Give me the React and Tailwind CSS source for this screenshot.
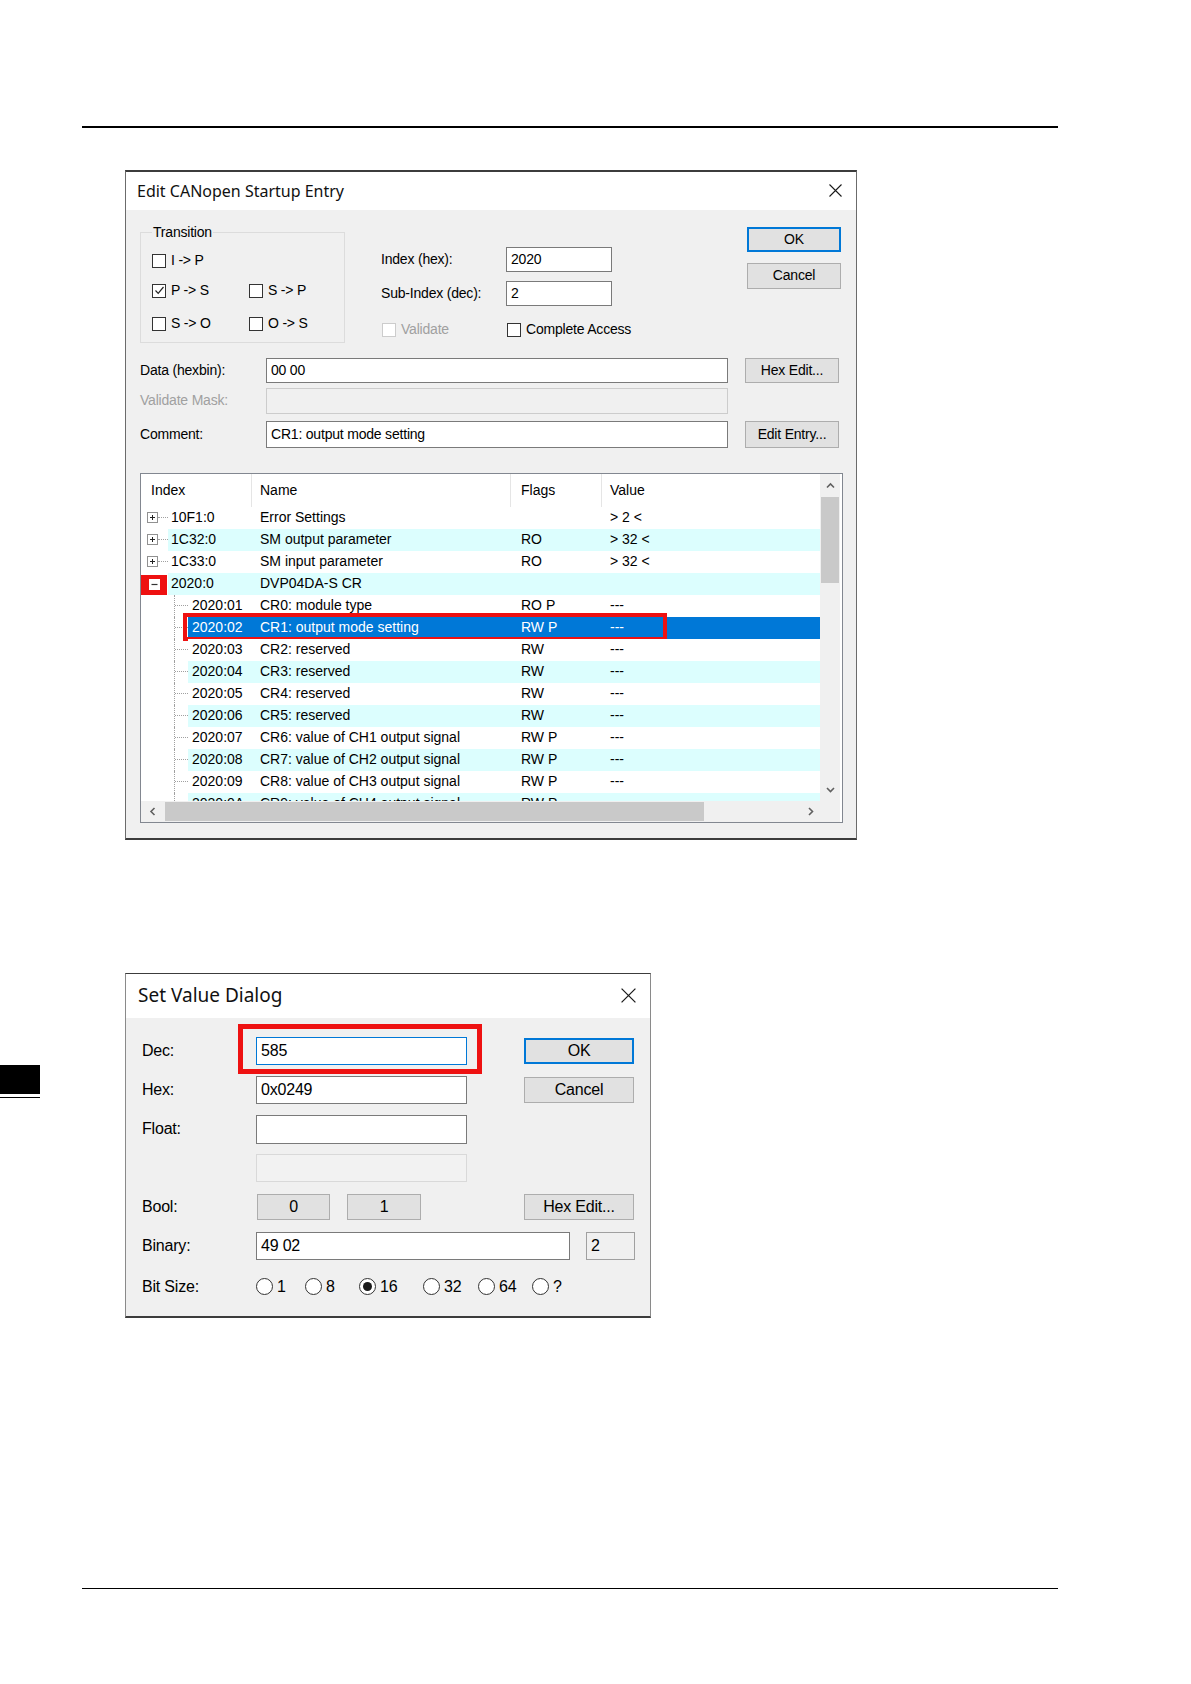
import React from "react";

const CloseIcon = ({ size = 13 }) => (
  <svg width={size} height={size} viewBox="0 0 13 13" fill="none" stroke="#1a1a1a" strokeWidth="1.1">
    <path d="M0.5 0.5 L12.5 12.5 M12.5 0.5 L0.5 12.5" />
  </svg>
);

const Chev = ({ dir }) => {
  const pts = {
    up: "1,5.5 4.5,2 8,5.5",
    down: "1,2 4.5,5.5 8,2",
    left: "5.5,1 2,4.5 5.5,8",
    right: "2,1 5.5,4.5 2,8",
  };
  const vertical = dir === "up" || dir === "down";
  return (
    <svg width={vertical ? 9 : 7} height={vertical ? 7 : 9} viewBox={vertical ? "0 0 9 7" : "0 0 7 9"} fill="none" stroke="#606060" strokeWidth="1.6">
      <polyline points={pts[dir]} />
    </svg>
  );
};

const Checkbox = ({ checked, disabled, label }) => (
  <div className="flex items-center h-[16px]">
    <span
      className={`w-[14px] h-[14px] border bg-white flex items-center justify-center ${
        disabled ? "border-[#cccccc]" : "border-[#333333]"
      }`}
    >
      {checked && (
        <svg width="11" height="11" viewBox="0 0 11 11" fill="none" stroke="#222" strokeWidth="1.2">
          <polyline points="1.5,5.5 4.2,8.3 9.5,2" />
        </svg>
      )}
    </span>
    <span className={`ml-[5px] whitespace-nowrap ${disabled ? "text-[#a0a0a0]" : ""}`}>{label}</span>
  </div>
);

const Btn = ({ children, def, className = "" }) => (
  <div
    className={`flex items-center justify-center bg-[#e1e1e1] whitespace-nowrap ${
      def ? "border-2 border-[#0078d7]" : "border border-[#adadad]"
    } ${className}`}
  >
    {children}
  </div>
);

const Field = ({ children, focus, className = "" }) => (
  <div
    className={`flex items-center bg-white border pl-[4px] whitespace-nowrap ${
      focus ? "border-[#0078d7]" : "border-[#7a7a7a]"
    } ${className}`}
  >
    {children}
  </div>
);

const PlusBox = () => (
  <svg width="11" height="11" viewBox="0 0 11 11">
    <rect x="0.5" y="0.5" width="10" height="10" fill="white" stroke="#919191" />
    <path d="M3 5.5h5M5.5 3v5" stroke="#222" />
  </svg>
);

const MinusBox = () => (
  <svg width="11" height="11" viewBox="0 0 11 11">
    <rect x="0.5" y="0.5" width="10" height="10" fill="white" stroke="white" />
    <path d="M2.5 5.5h6" stroke="#333" strokeWidth="1.2" />
  </svg>
);

const rows = [
  { level: 0, exp: "plus", idx: "10F1:0", name: "Error Settings", flags: "", value: "> 2 <" },
  { level: 0, exp: "plus", idx: "1C32:0", name: "SM output parameter", flags: "RO", value: "> 32 <" },
  { level: 0, exp: "plus", idx: "1C33:0", name: "SM input parameter", flags: "RO", value: "> 32 <" },
  { level: 0, exp: "minus", idx: "2020:0", name: "DVP04DA-S CR", flags: "", value: "" },
  { level: 1, idx: "2020:01", name: "CR0: module type", flags: "RO P", value: "---" },
  { level: 1, idx: "2020:02", name: "CR1: output mode setting", flags: "RW P", value: "---", selected: true },
  { level: 1, idx: "2020:03", name: "CR2: reserved", flags: "RW", value: "---" },
  { level: 1, idx: "2020:04", name: "CR3: reserved", flags: "RW", value: "---" },
  { level: 1, idx: "2020:05", name: "CR4: reserved", flags: "RW", value: "---" },
  { level: 1, idx: "2020:06", name: "CR5: reserved", flags: "RW", value: "---" },
  { level: 1, idx: "2020:07", name: "CR6: value of CH1 output signal", flags: "RW P", value: "---" },
  { level: 1, idx: "2020:08", name: "CR7: value of CH2 output signal", flags: "RW P", value: "---" },
  { level: 1, idx: "2020:09", name: "CR8: value of CH3 output signal", flags: "RW P", value: "---" },
  { level: 1, idx: "2020:0A", name: "CR9: value of CH4 output signal", flags: "RW P", value: "---" },
];

const TreeRow = ({ r, i }) => {
  const bg = r.selected ? "bg-[#0078d7] text-white" : i % 2 === 1 ? "bg-[#dcfefe]" : "bg-white";
  return (
    <div className="relative flex h-[22px] shrink-0">
      {r.level === 0 ? (
        <div className="w-[27px] h-full flex items-center">
          {r.exp === "minus" ? (
            <div className="mt-[2px] w-[26px] h-[20px] bg-[#ee1111] flex items-center justify-center">
              <MinusBox />
            </div>
          ) : (
            <>
              <div className="ml-[6px] flex">
                <PlusBox />
              </div>
              <div className="w-[10px] border-t border-dotted border-[#a0a0a0]" />
            </>
          )}
        </div>
      ) : (
        <div className="w-[47px] h-full flex">
          <div className="ml-[33px] h-full border-l border-dotted border-[#a0a0a0]" />
          <div className="self-center w-[14px] border-t border-dotted border-[#a0a0a0]" />
        </div>
      )}
      <div className={`flex-1 h-full flex items-center whitespace-nowrap ${bg}`}>
        <div className={r.level === 0 ? "w-[84px] pl-[3px]" : "w-[64px] pl-[4px]"}>{r.idx}</div>
        <div className="w-[259px] pl-[8px]">{r.name}</div>
        <div className="w-[91px] pl-[10px]">{r.flags}</div>
        <div className="pl-[8px]">{r.value}</div>
      </div>
      {r.selected && (
        <div className="absolute left-[42px] top-[-4px] w-[484px] h-[28px] border-4 border-[#ee1111]" />
      )}
    </div>
  );
};

const EntryList = () => (
  <div className="mt-[25px] h-[350px] border border-[#828790] bg-white flex flex-col text-[14px] tracking-normal">
    <div className="flex h-[327px]">
      <div className="w-[679px] flex flex-col">
        <div className="flex h-[33px] shrink-0">
          <div className="w-[111px] flex items-center pl-[10px] border-r border-[#e5e5e5]">Index</div>
          <div className="w-[259px] flex items-center pl-[8px] border-r border-[#e5e5e5]">Name</div>
          <div className="w-[91px] flex items-center pl-[10px] border-r border-[#e5e5e5]">Flags</div>
          <div className="flex-1 flex items-center pl-[8px]">Value</div>
        </div>
        <div className="h-[294px] overflow-hidden flex flex-col">
          {rows.map((r, i) => (
            <TreeRow key={r.idx} r={r} i={i} />
          ))}
        </div>
      </div>
      <div className="w-[20px] bg-[#f0f0f0] flex flex-col">
        <div className="h-[23px] flex items-center justify-center">
          <Chev dir="up" />
        </div>
        <div className="mx-[1px] h-[86px] bg-[#c9c9c9]" />
        <div className="flex-1" />
        <div className="h-[17px] mb-[3px] flex items-center justify-center">
          <Chev dir="down" />
        </div>
      </div>
    </div>
    <div className="flex h-[21px]">
      <div className="w-[679px] flex bg-[#f0f0f0]">
        <div className="w-[22px] flex items-center justify-center">
          <Chev dir="left" />
        </div>
        <div className="ml-[2px] my-[1px] w-[539px] bg-[#c9c9c9]" />
        <div className="flex-1" />
        <div className="w-[20px] flex items-center justify-center">
          <Chev dir="right" />
        </div>
      </div>
      <div className="w-[20px] bg-[#f0f0f0]" />
    </div>
  </div>
);

const EditDialog = () => (
  <div className="ml-[125px] mt-[42px] w-[732px] h-[670px] flex flex-col border border-[#6b6b6b] border-t-2 border-t-[#3c3c3c] border-b-2 border-b-[#3c3c3c] bg-[#f0f0f0]">
    <div className="h-[38px] shrink-0 bg-white flex items-center pl-[11px] pr-[14px]">
      <span className="font-['Noto_Sans',sans-serif] text-[16px] text-[#111]">Edit CANopen Startup Entry</span>
      <span className="ml-auto flex">
        <CloseIcon />
      </span>
    </div>
    <div className="flex-1 flex flex-col pl-[14px] pr-[13px] pt-[17px] text-[14px] tracking-[-0.2px]">
      <div className="flex items-start h-[116px]">
        <div className="relative mt-[5px] w-[205px] h-[111px] shrink-0 border border-[#dcdcdc]">
          <span className="absolute left-[11px] top-[-9px] bg-[#f0f0f0] px-[1px] leading-[16px]">Transition</span>
          <div className="ml-[11px] mt-[20px] flex flex-col">
            <Checkbox label="I -> P" />
            <div className="mt-[14px] flex">
              <div className="w-[97px]">
                <Checkbox checked label="P -> S" />
              </div>
              <Checkbox label="S -> P" />
            </div>
            <div className="mt-[17px] flex">
              <div className="w-[97px]">
                <Checkbox label="S -> O" />
              </div>
              <Checkbox label="O -> S" />
            </div>
          </div>
        </div>
        <div className="ml-[36px] mt-[20px] flex flex-col">
          <div className="flex items-center h-[25px]">
            <span className="w-[125px]">Index (hex):</span>
            <Field className="w-[106px] h-[25px]">2020</Field>
          </div>
          <div className="flex items-center h-[25px] mt-[9px]">
            <span className="w-[125px]">Sub-Index (dec):</span>
            <Field className="w-[106px] h-[25px]">2</Field>
          </div>
          <div className="flex items-center h-[20px] mt-[14px]">
            <div className="w-[126px] pl-[1px]">
              <Checkbox disabled label="Validate" />
            </div>
            <Checkbox label="Complete Access" />
          </div>
        </div>
        <div className="ml-auto mr-[2px] flex flex-col">
          <Btn def className="w-[94px] h-[25px]">OK</Btn>
          <Btn className="w-[94px] h-[26px] mt-[11px]">Cancel</Btn>
        </div>
      </div>

      <div className="mt-[15px] flex items-center h-[25px]">
        <span className="w-[126px]">Data (hexbin):</span>
        <Field className="w-[462px] h-[25px]">00 00</Field>
        <Btn className="ml-[17px] w-[94px] h-[25px]">Hex Edit...</Btn>
      </div>
      <div className="mt-[5px] flex items-center h-[26px]">
        <span className="w-[126px] text-[#a0a0a0]">Validate Mask:</span>
        <div className="w-[462px] h-[26px] border border-[#cccccc] bg-[#f0f0f0]" />
      </div>
      <div className="mt-[7px] flex items-center h-[27px]">
        <span className="w-[126px]">Comment:</span>
        <Field className="w-[462px] h-[27px]">CR1: output mode setting</Field>
        <Btn className="ml-[17px] w-[94px] h-[27px]">Edit Entry...</Btn>
      </div>

      <EntryList />
    </div>
  </div>
);

const Radio = ({ checked, label, className = "" }) => (
  <div className={`flex items-center ${className}`}>
    <span className="w-[17px] h-[17px] rounded-full border border-[#333333] bg-white flex items-center justify-center">
      {checked && <span className="w-[9px] h-[9px] rounded-full bg-[#1a1a1a]" />}
    </span>
    <span className="ml-[4px]">{label}</span>
  </div>
);

const SetValueDialog = () => (
  <div className="ml-[85px] w-[526px] h-[345px] flex flex-col border border-[#8a8a8a] border-t-[#3c3c3c] border-b-2 border-b-[#3c3c3c] bg-[#f0f0f0] text-[16px] tracking-[-0.2px]">
    <div className="h-[44px] shrink-0 bg-white flex items-center pl-[12px] pr-[14px]">
      <span className="font-['Noto_Sans',sans-serif] text-[19px] tracking-normal text-[#111]">Set Value Dialog</span>
      <span className="ml-auto flex">
        <CloseIcon size={15} />
      </span>
    </div>
    <div className="flex-1 flex flex-col pl-[16px] pt-[19px]">
      <div className="flex items-center h-[28px]">
        <span className="w-[114px]">Dec:</span>
        <div className="relative">
          <Field focus className="w-[211px] h-[28px]">585</Field>
          <div className="absolute left-[-18px] top-[-13px] w-[244px] h-[50px] border-[5px] border-[#ee1111]" />
        </div>
        <Btn def className="ml-[57px] w-[110px] h-[26px]">OK</Btn>
      </div>
      <div className="mt-[11px] flex items-center h-[28px]">
        <span className="w-[114px]">Hex:</span>
        <Field className="w-[211px] h-[28px]">0x0249</Field>
        <Btn className="ml-[57px] w-[110px] h-[26px]">Cancel</Btn>
      </div>
      <div className="mt-[11px] flex items-center h-[29px]">
        <span className="w-[114px]">Float:</span>
        <Field className="w-[211px] h-[29px]" />
      </div>
      <div className="mt-[10px] flex items-center h-[28px]">
        <span className="w-[114px]" />
        <div className="w-[211px] h-[28px] border border-[#d9d9d9] bg-[#f2f2f2]" />
      </div>
      <div className="mt-[12px] flex items-center h-[26px]">
        <span className="w-[114px]">Bool:</span>
        <Btn className="ml-[1px] w-[73px] h-[26px]">0</Btn>
        <Btn className="ml-[17px] w-[74px] h-[26px]">1</Btn>
        <Btn className="ml-[103px] w-[110px] h-[26px]">Hex Edit...</Btn>
      </div>
      <div className="mt-[12px] flex items-center h-[28px]">
        <span className="w-[114px]">Binary:</span>
        <Field className="w-[314px] h-[28px]">49 02</Field>
        <div className="ml-[16px] w-[49px] h-[28px] flex items-center pl-[4px] border border-[#a0a0a0] bg-[#f0f0f0]">2</div>
      </div>
      <div className="mt-[17px] flex items-center h-[20px]">
        <span className="w-[114px]">Bit Size:</span>
        <Radio label="1" className="w-[49px]" />
        <Radio label="8" className="w-[54px]" />
        <Radio checked label="16" className="w-[64px]" />
        <Radio label="32" className="w-[55px]" />
        <Radio label="64" className="w-[54px]" />
        <Radio label="?" />
      </div>
    </div>
  </div>
);

export default function App() {
  return (
    <div className="w-[1191px] h-[1684px] bg-white flex flex-col font-['Liberation_Sans',Arial,sans-serif] text-black">
      <div className="ml-[82px] mt-[126px] w-[976px] h-[1.5px] bg-black" />
      <EditDialog />
      <div className="flex items-start mt-[133px]">
        <div className="mt-[92px] w-[40px] flex flex-col">
          <div className="h-[29px] bg-black" />
          <div className="mt-[3px] h-[1.5px] bg-black" />
        </div>
        <SetValueDialog />
      </div>
      <div className="ml-[82px] mt-[270px] w-[976px] h-[1.5px] bg-black" />
    </div>
  );
}
